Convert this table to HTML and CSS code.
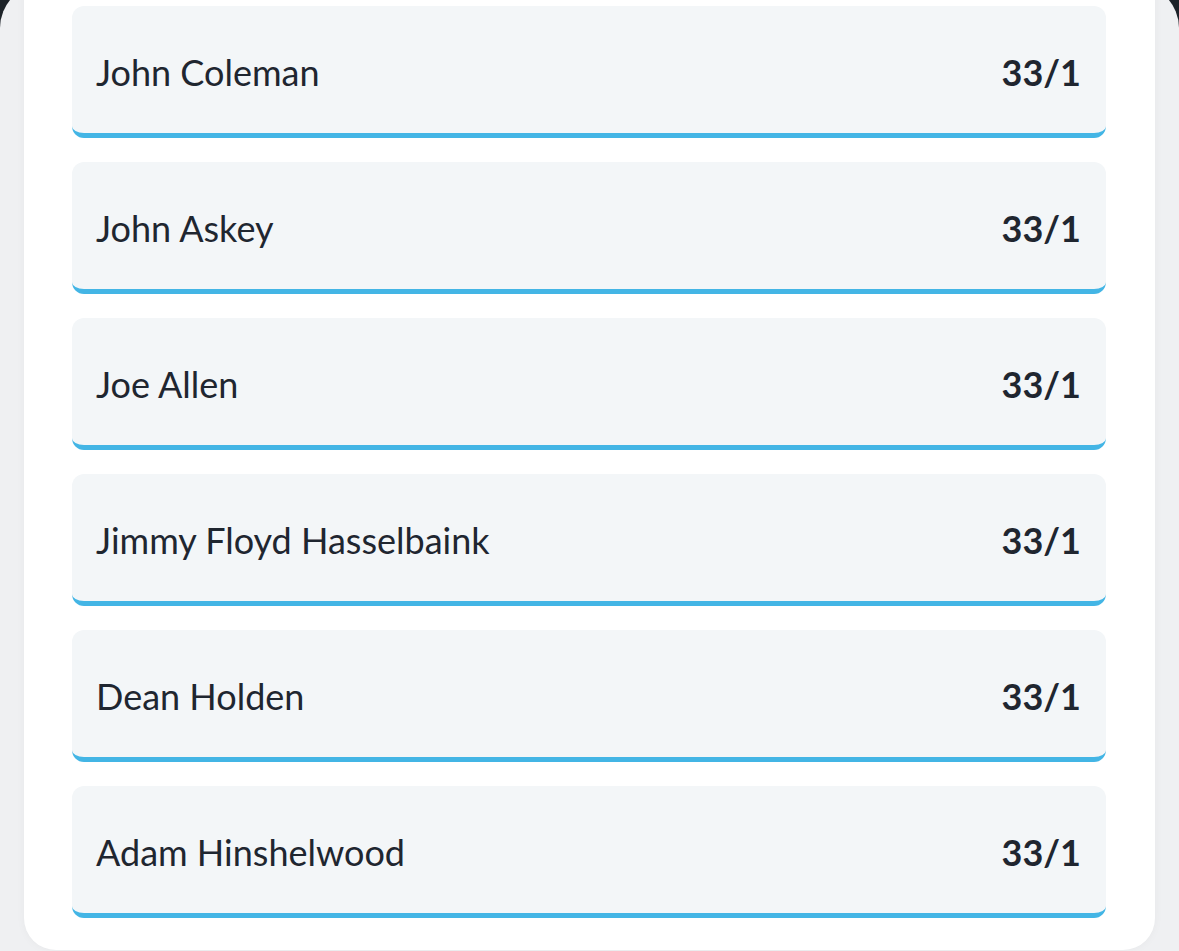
FILE: index.html
```html
<!DOCTYPE html>
<html>
<head>
<meta charset="utf-8">
<link rel="stylesheet" href="styles.css">
</head>
<body>
<div class="screen">
  <div class="sheet">
    <div class="row"><span class="name">John Coleman</span><span class="odds">33/1</span></div>
    <div class="row"><span class="name">John Askey</span><span class="odds">33/1</span></div>
    <div class="row"><span class="name">Joe Allen</span><span class="odds">33/1</span></div>
    <div class="row"><span class="name">Jimmy Floyd Hasselbaink</span><span class="odds">33/1</span></div>
    <div class="row"><span class="name">Dean Holden</span><span class="odds">33/1</span></div>
    <div class="row"><span class="name">Adam Hinshelwood</span><span class="odds">33/1</span></div>
  </div>
</div>
</body>
</html>
```

FILE: styles.css
```css
html, body {
  margin: 0;
  padding: 0;
}
body {
  background: #1d2329;
  width: 1179px;
  height: 951px;
  overflow: hidden;
  font-family: Lato, "Open Sans", sans-serif;
  color: #1f2630;
}
.screen {
  margin-top: -16px;
  height: 967px;
  background: #eff0f2;
  border-radius: 44px 44px 0 0;
  padding: 0 24px;
  box-sizing: border-box;
}
.sheet {
  background: #ffffff;
  border-radius: 0 0 32px 32px;
  padding: 22px 49px 32px 48px;
  display: flex;
  flex-direction: column;
  gap: 24px;
  box-shadow: 0 0 10px rgba(0, 0, 0, 0.04);
}
.row {
  height: 132px;
  box-sizing: border-box;
  background: #f3f6f8;
  border-radius: 12px;
  border-bottom: 5px solid #43b5e5;
  display: flex;
  align-items: center;
  justify-content: space-between;
  padding: 4px 25px 0 24px;
}
.name {
  font-size: 36px;
  font-weight: 400;
}
.odds {
  font-size: 36px;
  font-weight: 700;
}
```
